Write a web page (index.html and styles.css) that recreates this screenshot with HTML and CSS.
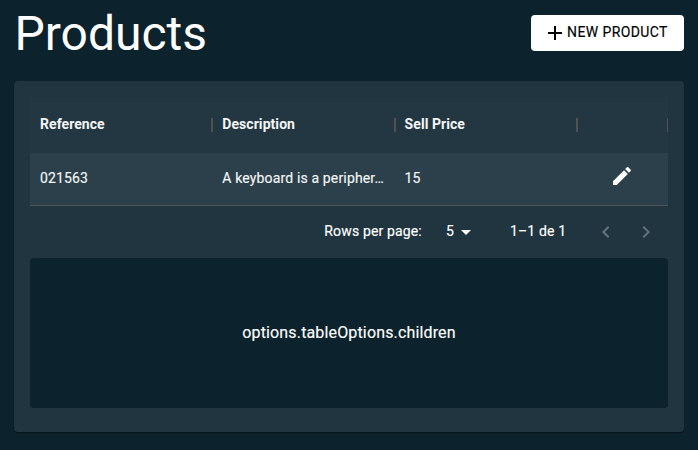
FILE: index.html
```html
<!DOCTYPE html>
<html lang="en">
<head>
<meta charset="utf-8">
<title>Products</title>
<link rel="stylesheet" href="styles.css">
</head>
<body>
<header class="page-header">
  <h1>Products</h1>
  <button class="new-button"><svg viewBox="0 0 24 24"><path d="M19 13h-6v6h-2v-6H5v-2h6V5h2v6h6v2z"/></svg><span>New product</span></button>
</header>
<main class="card">
  <div class="row head">
    <div class="cell">Reference<i class="sep"></i></div>
    <div class="cell">Description<i class="sep"></i></div>
    <div class="cell">Sell Price<i class="sep"></i></div>
    <div class="cell"><i class="sep last"></i></div>
  </div>
  <div class="row item">
    <div class="cell">021563</div>
    <div class="cell">A keyboard is a peripher…</div>
    <div class="cell">15</div>
    <div class="cell action"><svg viewBox="0 0 24 24"><path d="M3 17.25V21h3.75L17.81 9.94l-3.75-3.75L3 17.25zM20.71 7.04c.39-.39.39-1.02 0-1.41l-2.34-2.34a.9959.9959 0 0 0-1.41 0l-1.83 1.83 3.75 3.75 1.83-1.83z"/></svg></div>
  </div>
  <div class="pager">
    <span class="label">Rows per page:</span>
    <span class="size">5</span><svg class="caret" viewBox="0 0 24 24"><path d="M7 10l5 5 5-5z"/></svg>
    <span class="range">1–1 de 1</span>
    <svg class="nav" viewBox="0 0 24 24"><path d="M15.41 7.41L14 6l-6 6 6 6 1.41-1.41L10.83 12z"/></svg>
    <svg class="nav" viewBox="0 0 24 24"><path d="M10 6L8.59 7.41 13.17 12l-4.58 4.59L10 18l6-6z"/></svg>
  </div>
  <section class="children">options.tableOptions.children</section>
</main>
</body>
</html>
```
FILE: styles.css
```css
* { box-sizing: border-box; }
body {
  margin: 0;
  height: 450px;
  padding: 0 14px;
  background: #0c222c;
  color: #fff;
  font: 14px/20px Roboto, sans-serif;
  overflow: hidden;
}
svg { display: block; width: 24px; height: 24px; fill: currentColor; flex: none; }
.page-header { display: flex; justify-content: space-between; height: 81px; padding-top: 5px; }
h1 { margin: 1px 0 0 .5px; font-size: 48px; line-height: 56px; font-weight: 400; }
.new-button {
  display: flex;
  align-items: center;
  width: 153px;
  height: 36px;
  margin-top: 10px;
  padding: 0 0 0 12px;
  border: 0;
  border-radius: 4px;
  background: #fff;
  color: #000;
  font: 400 14px/24px Roboto, sans-serif;
  letter-spacing: .4px;
  text-transform: uppercase;
  -webkit-text-stroke: .15px #000;
}
.new-button span { margin-top: -2px; }
.card { height: 351px; padding: 16px; border-radius: 4px; background: #20353f; box-shadow: 0 1px 1px #0006; }
.row { display: grid; grid-template-columns: 182.3px 182.3px 182.3px 1fr; align-items: center; }
.cell { position: relative; min-width: 0; padding: 0 10px; white-space: nowrap; }
.head { height: 56px; padding-bottom: 2px; background: #223741; color: #f4f5f6; font-weight: 700; letter-spacing: .06px; }
.head .cell { height: 20px; }
.sep { position: absolute; right: -1px; top: 4px; width: 2px; height: 14px; background: #515151; }
.sep.last { right: 0; width: 1px; }
.item { height: 53px; padding-bottom: 2px; border-bottom: 1px solid #515457; background: #2b404a; color: #f4f5f6; font-weight: 400; letter-spacing: .15px; -webkit-text-stroke: .15px #f4f5f6; }
.action { display: flex; justify-content: center; margin: -4px 0 0; color: #fff; }
.pager { display: flex; align-items: center; height: 52px; padding-left: 294.3px; white-space: nowrap; letter-spacing: .15px; -webkit-text-stroke: .15px #fff; }
.label, .range { margin-top: -2px; }
.label { width: 98px; }
.size { width: 8px; margin: -3px 0 0 24px; }
.caret { margin: 0; }
.range { width: 56px; margin-left: 32px; margin-right: 27.7px; }
.nav { margin-right: 16px; color: #647279; }
.children { display: flex; align-items: center; justify-content: center; height: 150px; border-radius: 4px; background: #0c222c; font-size: 16px; letter-spacing: .15px; -webkit-text-stroke: .15px #fff; }
```
